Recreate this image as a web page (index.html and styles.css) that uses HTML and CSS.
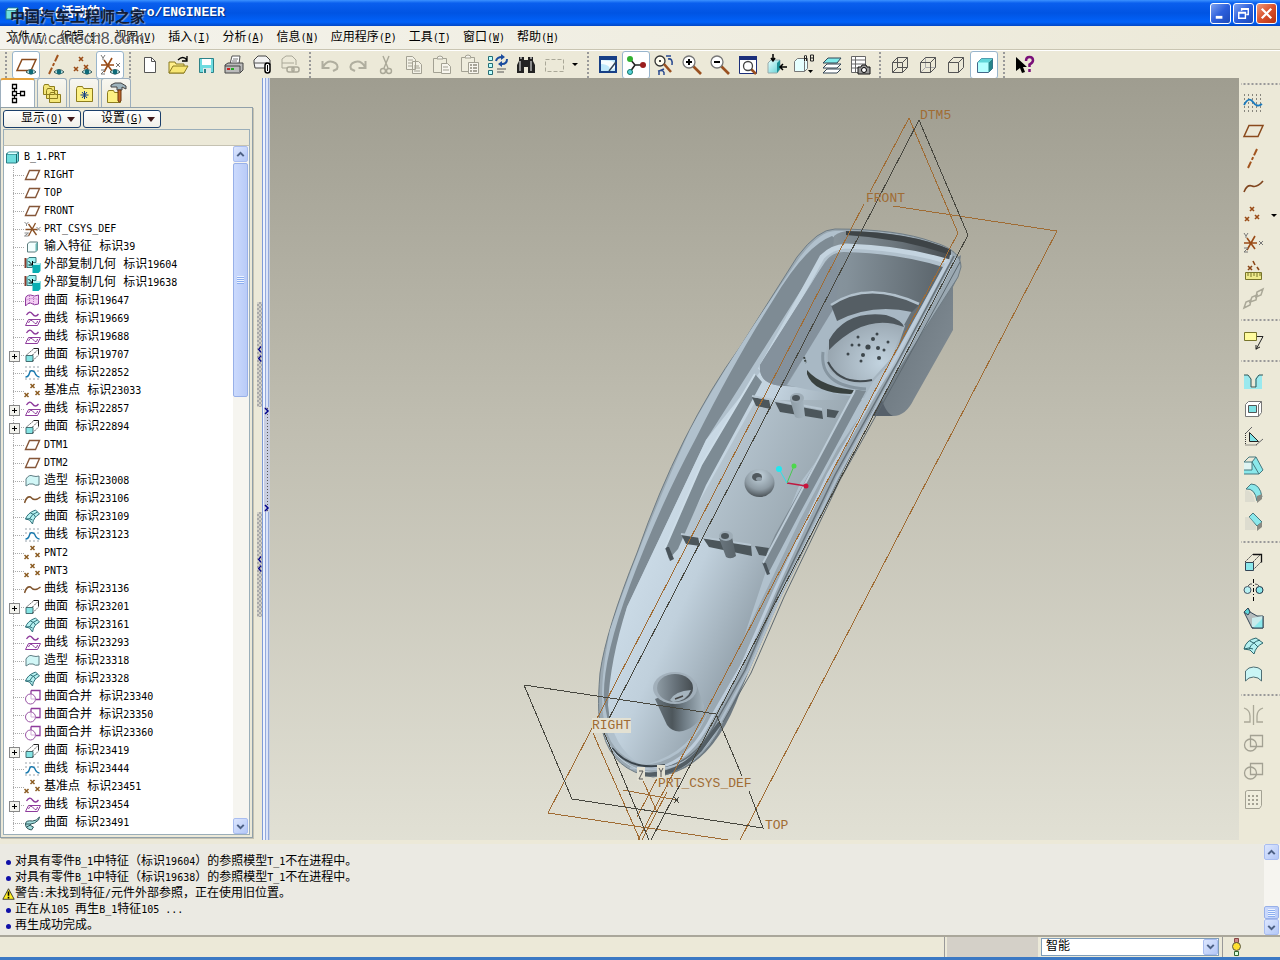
FILE: index.html
```html
<!DOCTYPE html>
<html lang="zh-CN">
<head>
  <meta charset="UTF-8">
  <meta name="viewport" content="width=device-width, initial-scale=1.0">
  <title>B_1 (活动的) - Pro/ENGINEER</title>
  <link rel="stylesheet" href="styles.css">
</head>
<body>
  <!-- 图标定义 -->
  <svg class="defs" aria-hidden="true">
    <defs>
      <linearGradient id="g-cyan" x1="0" y1="0" x2="1" y2="1"><stop offset="0" stop-color="#e8ffff"/><stop offset="1" stop-color="#5fd0d4"/></linearGradient>
    </defs>
    <!-- 模型树图标 16x16 -->
    <symbol id="t-part" viewBox="0 0 16 16"><path d="M2 5l2-2h10v9l-2 2H2z" fill="#6fdede" stroke="#2a7f86"/><path d="M2 5h10v9M12 5l2-2" fill="none" stroke="#1d666c"/><path d="M3 5l1-1.500h9l-1 1.500z" fill="#e2ffff"/></symbol>
    <symbol id="t-plane" viewBox="0 0 16 16"><path d="M5 3.500h10l-4 9H1z" fill="none" stroke="#855638" stroke-width="1.400"/></symbol>
    <symbol id="t-csys" viewBox="0 0 16 16"><path d="M1 8.500h12M4 3l8 11M11 2L4 15" stroke="#8a5024" stroke-width="1.300"/><path d="M0 1l2 2 2-2M2 3v2M0 12h4l-4 3h4M12 6l4 4M16 6l-4 4" fill="none" stroke="#888"/></symbol>
    <symbol id="t-input" viewBox="0 0 16 16"><path d="M3 5l2-2h8v8l-2 2H3z" fill="#f2ffff" stroke="#5b7b7c"/><path d="M11 5v8l2-2V3z" fill="#6bb8b5"/></symbol>
    <symbol id="t-ext" viewBox="0 0 16 16"><path d="M0 1h2v10H0z" fill="#853a2a"/><path d="M2.500 2.500l2-2h7v5H8v5H2.500z" fill="#9df1f1" stroke="#36797d"/><path d="M8 8l2-2h6v8l-2 2H8z" fill="#09aeb3"/><path d="M10 6h6l-1 2H8z" fill="#b5f5f5"/><path d="M4 4l4 4M8 4v4H4" stroke="#000" fill="none"/></symbol>
    <symbol id="t-surf" viewBox="0 0 16 16"><path d="M1 13V6q0-4 5-4 4 2 8 0v9q-4 2-8-1-3 0-5 3z" fill="#f3cdf3" stroke="#8e3b9c"/><path d="M5 3v7M9 4v7M2 7q7-3 12 0" fill="none" stroke="#b771c2" stroke-dasharray="1 1"/></symbol>
    <symbol id="t-proj" viewBox="0 0 16 16"><path d="M2 4q3-5 6-1t6 0" fill="none" stroke="#8e3b9c" stroke-width="1.300"/><path d="M4 8.500h12l-3 6H1zM4 12q2-5 5-1t4-1" fill="none" stroke="#8e3b9c"/></symbol>
    <symbol id="t-sweep" viewBox="0 0 16 16"><path d="M1.500 8.500h7v6h-7z" fill="#85e4e4" stroke="#456e72"/><path d="M2 8l7-6M8 8l6-6M8 14l6-6" stroke="#444" stroke-dasharray="1.500 1"/><path d="M9 1.500h5v6" fill="none" stroke="#222"/></symbol>
    <symbol id="t-sketch" viewBox="0 0 16 16"><path d="M1 2h14M1 6h14M1 14h14" stroke="#345" stroke-dasharray="1 3"/><path d="M1 12q3 0 4-4t5-1q2 5 5 5" fill="none" stroke="#1879ae" stroke-width="1.400"/></symbol>
    <symbol id="t-pnt" viewBox="0 0 16 16"><path d="M6 1l4 4M10 1L6 5M0 10l4 4M4 10l-4 4M11 8l4 4M15 8l-4 4" stroke="#8a5a20" stroke-width="1.500"/></symbol>
    <symbol id="t-style" viewBox="0 0 16 16"><path d="M1.500 13V6q3-5 7-3 3 1 6 0v9q-4 1-6-1-4-1-7 2z" fill="#d2f7f7" stroke="#5f7e84"/></symbol>
    <symbol id="t-curve" viewBox="0 0 16 16"><path d="M0 12q2-7 6-6 4 5 10 0" fill="none" stroke="#80552e" stroke-width="1.500"/></symbol>
    <symbol id="t-bound" viewBox="0 0 16 16"><path d="M1 10Q3 4 11 1l4 4q-6 3-7 10l-3-4z" fill="#b5f1f1" stroke="#31717a"/><path d="M6 4q4 1 5 4M1 10q5-1 7 1M5 10q2-5 8-7" fill="none" stroke="#31717a"/></symbol>
    <symbol id="t-merge" viewBox="0 0 16 16"><path d="M6.500 1.500h9v9h-4M6.500 1.500v4" fill="none" stroke="#8e3b9c" stroke-width="1.300"/><circle cx="6" cy="10" r="5" fill="none" stroke="#9a55a6"/><path d="M6.500 5v5H11" stroke="#d4b0da" fill="none"/></symbol>
    <symbol id="t-blend" viewBox="0 0 16 16"><path d="M15 2Q12 6 8 6 1 5 1 9q0 5 6 6l2-3q-4-1-3-3 4 0 8-4z" fill="#a5dfdf" stroke="#2d5558"/><path d="M1 9h5M2 12l4-2" stroke="#2d5558"/></symbol>

    <!-- 工具栏图标 24x24 -->
    <symbol id="eye" viewBox="0 0 24 24"><path d="M12 19q5-5 10 0-5 4-10 0z" fill="#dff" stroke="#355"/><circle cx="17" cy="19" r="2.400" fill="#0e6a78"/></symbol>
    <symbol id="plane" viewBox="0 0 24 24"><path d="M8 6.500h14l-5 11H3z" fill="none" stroke="#8a4a1c" stroke-width="1.500"/></symbol>
    <symbol id="axis" viewBox="0 0 24 24"><path d="M16 2L7 21" stroke="#a2541e" stroke-width="2" stroke-dasharray="7 2 3 2"/></symbol>
    <symbol id="points" viewBox="0 0 24 24"><path d="M9 4l4 4M13 4L9 8M4 14l4 4M8 14l-4 4M14 12l4 4M18 12l-4 4" stroke="#9a4b16" stroke-width="1.600"/></symbol>
    <symbol id="csys" viewBox="0 0 24 24"><path d="M3 12h13M6 7l8 11M14 5L6 19" stroke="#9a4b16" stroke-width="1.600"/><path d="M3 2l2 3 2-3M5 5v2M3 17h4l-4 4h4M18 10l4 4M22 10l-4 4" fill="none" stroke="#777"/></symbol>
    <symbol id="new" viewBox="0 0 24 24"><path d="M6.500 4.500h7l4 4v11h-11z" fill="#fff" stroke="#555"/><path d="M13.500 4.500v4h4" fill="none" stroke="#555"/></symbol>
    <symbol id="open" viewBox="0 0 24 24"><path d="M3 9h6l1 2h8v9H3z" fill="#ffef8a" stroke="#8a7a20"/><path d="M3 20l4-7h15l-4 7z" fill="#f7e673" stroke="#8a7a20"/><path d="M12 7q5-5 9 0M21 3v5h-5" fill="none" stroke="#000" stroke-width="1.300"/></symbol>
    <symbol id="save" viewBox="0 0 24 24"><path d="M5.500 5.500h14v14h-14z" fill="#6edce0" stroke="#2e8288"/><path d="M8 6h9v6H8z" fill="#fff"/><path d="M9 15h8v5H9z" fill="#dfe8e8"/><path d="M10 16h2v4h-2z" fill="#2e8288"/></symbol>
    <symbol id="print" viewBox="0 0 24 24"><path d="M8 11l2-8h8l-1 8z" fill="#fff" stroke="#555"/><path d="M11 6h5M10 8h5" stroke="#777"/><path d="M3 12l3-2h15v7l-3 3H3z" fill="#bbb" stroke="#444"/><path d="M3 13h15v6" fill="none" stroke="#444"/><path d="M5 16h3" stroke="#c22" stroke-width="2"/><path d="M9 16h3" stroke="#2a2" stroke-width="2"/></symbol>
    <symbol id="mail" viewBox="0 0 24 24"><path d="M4 10V7l4-4h8l4 4v5h-3v3H5z" fill="#f2f2f2" stroke="#444"/><path d="M4 10h13" stroke="#555"/><rect x="15" y="10" width="5" height="10" rx="2.500" fill="#fff" stroke="#000" stroke-width="1.500"/><path d="M17.500 12v6" stroke="#000"/></symbol>
    <symbol id="maillink" viewBox="0 0 24 24"><path d="M4 10V6l4-3h6l4 4v5M4 10v5h6M4 10h12" fill="none" stroke="#aaa898"/><rect x="9" y="14" width="7" height="5" rx="2" fill="none" stroke="#aaa898" stroke-width="1.500"/><rect x="14" y="14" width="7" height="5" rx="2" fill="none" stroke="#aaa898" stroke-width="1.500"/></symbol>
    <symbol id="undo" viewBox="0 0 24 24"><path d="M4.500 8v7h7M5 14q4-7 10-5 6 2 4 7l-4 2" fill="none" stroke="#b0ae9f" stroke-width="2"/></symbol>
    <symbol id="redo" viewBox="0 0 24 24"><path d="M19.500 8v7h-7M19 14q-4-7-10-5-6 2-4 7l4 2" fill="none" stroke="#b0ae9f" stroke-width="2"/></symbol>
    <symbol id="cut" viewBox="0 0 24 24"><path d="M9 3l5 12M15 3l-5 12" stroke="#aaa898" stroke-width="1.400"/><circle cx="9" cy="18" r="2.500" fill="none" stroke="#aaa898" stroke-width="1.400"/><circle cx="15" cy="18" r="2.500" fill="none" stroke="#aaa898" stroke-width="1.400"/></symbol>
    <symbol id="copy" viewBox="0 0 24 24"><path d="M4.500 3.500h6l3 3v10h-9zM10.500 8.500h6l3 3v9h-9z" fill="#f3f1e6" stroke="#a3a193"/><path d="M6 7h5M6 10h4M6 13h4M12 13h5M12 15h6M12 18h6" stroke="#a3a193"/></symbol>
    <symbol id="paste" viewBox="0 0 24 24"><path d="M3.500 5.500h13v14h-13z" fill="#efeddd" stroke="#a3a193"/><path d="M7 6q0-3 3-3t3 3zM11.500 10.500h6l3 3v7h-9z" fill="#f8f6ee" stroke="#a3a193"/><path d="M13 14h5M13 17h6" stroke="#a3a193"/></symbol>
    <symbol id="pastesp" viewBox="0 0 24 24"><path d="M3.500 4.500h13v14h-13z" fill="#efeddd" stroke="#a3a193"/><path d="M7 5q0-3 3-3t3 3zM10.500 9.500h10v11h-10z" fill="#f8f6ee" stroke="#a3a193"/><path d="M12 12h2M15 12h4M12 15h2M15 15h4M12 18h2M15 18h4" stroke="#8d8b7e" stroke-width="1.400"/></symbol>
    <symbol id="regen" viewBox="0 0 24 24"><path d="M2.500 3.500h4v4h-4zM2.500 10.500h4v4h-4zM2.500 17.500h4v4h-4z" fill="#bff" stroke="#276d75"/><path d="M10 8q1-4 6-4M21 6q0 5-5 5" fill="none" stroke="#1a4c9e" stroke-width="2"/><path d="M15 1l4 3-4 3zM16 8v6l-4-3z" fill="#1a4c9e"/><path d="M11 16h9M11 19h7" stroke="#555"/></symbol>
    <symbol id="find" viewBox="0 0 24 24"><path d="M5 4h5v3h4V4h5v4l2 4v8h-7v-6h-4v6H3v-8l2-4z" fill="#222"/><path d="M6 8v10M17 8v10M6 5h2M16 5h2" stroke="#bbb" stroke-width="1.400"/></symbol>
    <symbol id="select" viewBox="0 0 24 24"><path d="M3.500 6.500h18v12h-18z" fill="none" stroke="#aaa898" stroke-dasharray="4 2"/></symbol>
    <symbol id="repaint" viewBox="0 0 24 24"><path d="M3 3h18v17H3z" fill="#173f86"/><path d="M5 7h14v11H5z" fill="#bfe9fb"/><path d="M5 7l10 1q5 1 4 7l-6 3q3-6-8-7z" fill="#f6fdff"/><path d="M13 18l7-9" stroke="#345" stroke-width="1.500"/></symbol>
    <symbol id="spin" viewBox="0 0 24 24"><path d="M6 6l5 6h8M11 12l-5 7" fill="none" stroke="#222" stroke-width="1.600"/><circle cx="6" cy="6" r="3" fill="#30b030"/><circle cx="19" cy="12" r="3" fill="#9a1c1c"/><circle cx="6" cy="19" r="2.500" fill="#58d2dc" stroke="#176"/></symbol>
    <symbol id="orient" viewBox="0 0 24 24"><circle cx="8" cy="8" r="5" fill="#fffdf0" stroke="#333" stroke-width="1.300"/><circle cx="8" cy="8" r="1"/><path d="M12 11l7 8" stroke="#9a5020" stroke-width="2.500"/><path d="M14 3h5M16 6q5-1 4 6M12 16l-5 2v4M6 18q7-2 6 4" fill="none" stroke="#27488f" stroke-width="1.500"/></symbol>
    <symbol id="zoomin" viewBox="0 0 24 24"><path d="M13 13l8 8" stroke="#9a5020" stroke-width="2.600"/><circle cx="9" cy="9" r="6" fill="#fff" stroke="#777" stroke-width="1.300"/><path d="M6 9h6M9 6v6" stroke="#000" stroke-width="2"/></symbol>
    <symbol id="zoomout" viewBox="0 0 24 24"><path d="M13 13l8 8" stroke="#9a5020" stroke-width="2.600"/><circle cx="9" cy="9" r="6" fill="#fff" stroke="#777" stroke-width="1.300"/><path d="M6 9h6" stroke="#000" stroke-width="2"/></symbol>
    <symbol id="refit" viewBox="0 0 24 24"><path d="M3.500 4.500h17v16h-17z" fill="#fff" stroke="#1c2f7a"/><path d="M3 3h18v4H3z" fill="#1c2f7a"/><path d="M15 16l5 5" stroke="#9a5020" stroke-width="2.500"/><circle cx="12" cy="13" r="4.500" fill="#fff" stroke="#444" stroke-width="1.300"/></symbol>
    <symbol id="reorient" viewBox="0 0 24 24"><path d="M4 10l3-3h9v9l-3 4H4z" fill="url(#g-cyan)" stroke="#9aa"/><path d="M13 10l3-3v9l-3 4z" fill="#1c8f95"/><path d="M9 1v6M7 5l2 3 2-3M23 14h-7M19 11l-3 3 3 3" stroke="#000" fill="none" stroke-width="1.500"/></symbol>
    <symbol id="views" viewBox="0 0 24 24"><path d="M2.500 8.500l3-3h10v10l-3 3h-10z" fill="#e6ffff" stroke="#777"/><path d="M12.500 18.500v-10l3-3" fill="none" stroke="#777"/><path d="M12.500 8V3l1-1 1 1v5M12 5.500h3M18.500 2v6h3V2zM18.500 5h3" fill="#ece9d8" stroke="#222"/><path d="M16 17h5l-2.500 3z"/></symbol>
    <symbol id="layers" viewBox="0 0 24 24"><path d="M3 20l4-4h14l-4 4zM3 15l4-4h14l-4 4z" fill="#fff" stroke="#345"/><path d="M3 10l5-5h13l-4 5z" fill="#80eaea" stroke="#345"/></symbol>
    <symbol id="viewmgr" viewBox="0 0 24 24"><path d="M3.500 3.500h14v16h-14zM3.500 7h14M3.500 11h14M3.500 15h14M7.500 4v15" fill="#fff" stroke="#666"/><path d="M10 14h3l1-2h4l1 2h3v7H10z" fill="#999" stroke="#111"/><circle cx="16" cy="17" r="2.500" fill="#fff" stroke="#000"/></symbol>
    <symbol id="wire" viewBox="0 0 24 24"><path d="M4.500 9.500l5-5h10v10l-5 5h-10zM4.500 9.500h10v10M14.500 9.500l5-5M9.500 4.500v10h10M4.500 19.500l5-5" fill="none" stroke="#555"/></symbol>
    <symbol id="hidden" viewBox="0 0 24 24"><path d="M9.500 4.500v10h10M4.500 19.500l5-5" fill="none" stroke="#aaa"/><path d="M4.500 9.500l5-5h10v10l-5 5h-10zM4.500 9.500h10v10M14.500 9.500l5-5" fill="none" stroke="#555"/></symbol>
    <symbol id="nohidden" viewBox="0 0 24 24"><path d="M4.500 9.500l5-5h10v10l-5 5h-10zM4.500 9.500h10v10M14.500 9.500l5-5" fill="none" stroke="#555"/></symbol>
    <symbol id="shade" viewBox="0 0 24 24"><path d="M5.500 9.500l4-4h11v10l-4 4h-11z" fill="#b4ffff" stroke="#468"/><path d="M16.500 9.500l4-4v10l-4 4z" fill="#268589"/><path d="M5.500 9.500h11l4-4h-11z" fill="#5fd5d8"/></symbol>
    <symbol id="help" viewBox="0 0 24 24"><path d="M4 4v14l4-3 2 5 3-1-2-5h4z"/><path d="M14 8q0-4 3.500-4T21 7.500q0 2-3.500 4V14M17.500 16v3" fill="none" stroke="#7a1079" stroke-width="2.500"/></symbol>
    <!-- 右侧工具栏 -->
    <symbol id="sketch" viewBox="0 0 24 24"><path d="M3 4h18M3 8h18M3 12h18M3 16h18M3 20h18" stroke="#222" stroke-dasharray="1 3"/><path d="M3 14q5-9 9-3t9 2" fill="none" stroke="#1879bd" stroke-width="1.800"/></symbol>
    <symbol id="curve" viewBox="0 0 24 24"><path d="M3 17q3-8 8-6 5 2 11-5" fill="none" stroke="#80451e" stroke-width="1.600"/></symbol>
    <symbol id="analysis" viewBox="0 0 24 24"><path d="M7 7l4 4M11 7l-4 4M12 2l2 4M16 8l2 3" stroke="#8a4516" stroke-width="1.600"/><path d="M4.500 13.500h16v7h-16z" fill="#eeea8c" stroke="#77742a"/><path d="M7 14v3M10 14v4M13 14v3M16 14v4M19 14v3" stroke="#77742a"/></symbol>
    <symbol id="chain" viewBox="0 0 24 24"><path d="M3 21l2-6 5-2-1 5-6 3zM9 15l2-5 5-2-1 5zM15 10l1-5 6-3-2 6z" fill="none" stroke="#aaa898" stroke-width="1.500"/></symbol>
    <symbol id="annot" viewBox="0 0 24 24"><path d="M3.500 4.500h12v8h-12z" fill="#fffb9e" stroke="#77742a"/><path d="M16 8.500h6l-7 13M15 21v-4M15 21l4-2" fill="none" stroke="#222"/></symbol>
    <symbol id="hole" viewBox="0 0 24 24"><path d="M3 6h4l3 4v9h4v-9l3-4h4v14H3z" fill="#9ae9ee"/><path d="M3 6h4l3 4v8h5v-8l3-4h4" fill="none" stroke="#355"/></symbol>
    <symbol id="shell" viewBox="0 0 24 24"><path d="M4.500 7.500l3-3h13v11l-3 4h-13z" fill="#fff" stroke="#777"/><path d="M7.500 8.500h8v7h-8z" fill="#7fe3e6" stroke="#555"/><path d="M17.500 19.500V7.500l3-3" fill="none" stroke="#777"/></symbol>
    <symbol id="rib" viewBox="0 0 24 24"><path d="M8.500 7.500v9h9z" fill="#7fe3e6" stroke="#222"/><path d="M5 8l6-6M15 20l7-6" stroke="#666"/><path d="M4.500 8v12h12" fill="none" stroke="#333" stroke-dasharray="1 1"/></symbol>
    <symbol id="draft" viewBox="0 0 24 24"><path d="M3 9h8v8H3z" fill="#dff4f2"/><path d="M11 9l4-5 7 13-4 4H3v-4h8z" fill="#8be8eb"/><path d="M3 9h8v8H3M3 9l5-5h7M11 9l4-5 7 13-4 4zM3 21h15" fill="none" stroke="#47787e"/></symbol>
    <symbol id="round" viewBox="0 0 24 24"><path d="M5 8q9-1 11 12l5-4Q19 3 10 3z" fill="#8be8eb" stroke="#47787e"/><path d="M4 9q8 0 10 12H4z" fill="#dddccf"/><path d="M16 15v7l5-4v-5z" fill="#8a8a82"/></symbol>
    <symbol id="chamfer" viewBox="0 0 24 24"><path d="M8 8l4-4 9 9-5 4z" fill="#8be8eb" stroke="#47787e"/><path d="M4 8h4l7 9v4H4z" fill="#dddccf"/><path d="M16 17v5l5-4v-5z" fill="#8a8a82"/></symbol>
    <symbol id="extrude" viewBox="0 0 24 24"><path d="M4.500 12.500h8v8h-8z" fill="#8be8eb" stroke="#345"/><path d="M4 12l8-8M12 12l8-8M12 20l8-8" stroke="#444" stroke-dasharray="2 1"/><path d="M12 4.500h8.500v8" fill="none" stroke="#111" stroke-width="1.300"/></symbol>
    <symbol id="revolve" viewBox="0 0 24 24"><circle cx="6.500" cy="12" r="3.500" fill="#b6f0f2" stroke="#456"/><circle cx="18.500" cy="12" r="3.500" fill="#8be8eb" stroke="#234"/><path d="M7 8q2-3 4-2M14 6q3 0 4 2" fill="none" stroke="#555"/><path d="M12.500 1v22" stroke="#000" stroke-dasharray="4 2 1 2"/></symbol>
    <symbol id="sweep" viewBox="0 0 24 24"><path d="M3 6l4-4 2 4 7 4h6v12H11z" fill="#b5bcbd" stroke="#345"/><path d="M3 6l4-4 2 4-2 3z" fill="#5fd5d8" stroke="#345"/><path d="M11 21V12l11-2v11z" fill="#c8ebec"/><path d="M12 22L22 12v10z" fill="#8be8eb"/><path d="M22 10v12H11" fill="none" stroke="#345"/></symbol>
    <symbol id="bound" viewBox="0 0 24 24"><path d="M3 15Q5 6 15 4l7 5q-7 3-9 11l-4-4z" fill="#b5f1f1" stroke="#2e686e"/><path d="M9 7q5 2 8 6M3 15q5-2 9 0M8 15q3-7 11-9" fill="none" stroke="#2e686e"/></symbol>
    <symbol id="style" viewBox="0 0 24 24"><path d="M4.500 19V9q3-4 8-4t8 3v11q-3-4-8-4t-8 4z" fill="#c9f5f5" stroke="#4f6e74"/></symbol>
    <symbol id="mirror" viewBox="0 0 24 24"><path d="M3 5q6 2 6 8v6H3M22 5q-6 2-6 8v6h6M12.500 2v20" fill="none" stroke="#aaa898" stroke-width="1.300"/></symbol>
    <symbol id="merge" viewBox="0 0 24 24"><path d="M9.500 4.500h12v11h-12z" fill="none" stroke="#a3a193" stroke-width="1.300"/><circle cx="9.500" cy="14" r="6" fill="none" stroke="#a3a193" stroke-width="1.300"/></symbol>
    <symbol id="pattern" viewBox="0 0 24 24"><path d="M4.500 4.500l2-1h14v15l-2 3h-14z" fill="#efeddd" stroke="#a3a193"/><path d="M7 9h11M7 13h11M7 17h11" stroke="#a3a193" stroke-width="2" stroke-dasharray="2 2"/></symbol>
  </svg>

  <!-- 标题栏 -->
  <header class="titlebar">
    <svg class="title-icon"><use href="#t-part"/></svg>
    <h1 class="title">B_1 (活动的) - Pro/ENGINEER</h1>
    <div class="win-buttons">
      <button class="win-btn" aria-label="最小化"><svg viewBox="0 0 20 20"><path d="M5 14h7" stroke="#fff" stroke-width="3"/></svg></button>
      <button class="win-btn" aria-label="还原"><svg viewBox="0 0 20 20"><path d="M8 7V5h7v6h-2M8 5.500h7M5 9h7v6H5zM5 9.500h7" fill="none" stroke="#fff" stroke-width="1.500"/></svg></button>
      <button class="win-btn close" aria-label="关闭"><svg viewBox="0 0 20 20"><path d="M5 5l10 10M15 5L5 15" stroke="#fff" stroke-width="2.400"/></svg></button>
    </div>
  </header>
  <div class="watermark">
    <div class="wm-cn">中国汽车工程师之家</div>
    <div class="wm-url">www.cartech8.com</div>
  </div>

  <!-- 菜单 -->
  <nav class="menubar">
    <button>文件<span class="en">(<u>F</u>)</span></button>
    <button>编辑<span class="en">(<u>E</u>)</span></button>
    <button>视图<span class="en">(<u>V</u>)</span></button>
    <button>插入<span class="en">(<u>I</u>)</span></button>
    <button>分析<span class="en">(<u>A</u>)</span></button>
    <button>信息<span class="en">(<u>N</u>)</span></button>
    <button>应用程序<span class="en">(<u>P</u>)</span></button>
    <button>工具<span class="en">(<u>T</u>)</span></button>
    <button>窗口<span class="en">(<u>W</u>)</span></button>
    <button>帮助<span class="en">(<u>H</u>)</span></button>
  </nav>

  <!-- 工具栏 -->
  <div class="toolbar">
    <i class="sep"></i>
    <button class="tool on" aria-label="基准平面"><svg><use href="#plane"/><use href="#eye"/></svg></button>
    <button class="tool" aria-label="基准轴"><svg><use href="#axis"/><use href="#eye"/></svg></button>
    <button class="tool" aria-label="基准点"><svg><use href="#points"/><use href="#eye"/></svg></button>
    <button class="tool on" aria-label="坐标系"><svg><use href="#csys"/><use href="#eye"/></svg></button>
    <i class="sep"></i>
    <button class="tool" aria-label="新建"><svg><use href="#new"/></svg></button>
    <button class="tool" aria-label="打开"><svg><use href="#open"/></svg></button>
    <button class="tool" aria-label="保存"><svg><use href="#save"/></svg></button>
    <button class="tool" aria-label="打印"><svg><use href="#print"/></svg></button>
    <button class="tool" aria-label="发送"><svg><use href="#mail"/></svg></button>
    <button class="tool" aria-label="发送链接"><svg><use href="#maillink"/></svg></button>
    <i class="sep"></i>
    <button class="tool" aria-label="撤消"><svg><use href="#undo"/></svg></button>
    <button class="tool" aria-label="重做"><svg><use href="#redo"/></svg></button>
    <button class="tool" aria-label="剪切"><svg><use href="#cut"/></svg></button>
    <button class="tool" aria-label="复制"><svg><use href="#copy"/></svg></button>
    <button class="tool" aria-label="粘贴"><svg><use href="#paste"/></svg></button>
    <button class="tool" aria-label="选择性粘贴"><svg><use href="#pastesp"/></svg></button>
    <button class="tool" aria-label="再生"><svg><use href="#regen"/></svg></button>
    <button class="tool" aria-label="查找"><svg><use href="#find"/></svg></button>
    <button class="tool" aria-label="选取"><svg><use href="#select"/></svg></button>
    <button class="drop" aria-label="选取选项"><i class="caret"></i></button>
    <i class="sep"></i>
    <button class="tool" aria-label="重画"><svg><use href="#repaint"/></svg></button>
    <button class="tool on" aria-label="旋转中心"><svg><use href="#spin"/></svg></button>
    <button class="tool" aria-label="定向模式"><svg><use href="#orient"/></svg></button>
    <button class="tool" aria-label="放大"><svg><use href="#zoomin"/></svg></button>
    <button class="tool" aria-label="缩小"><svg><use href="#zoomout"/></svg></button>
    <button class="tool" aria-label="重新调整"><svg><use href="#refit"/></svg></button>
    <button class="tool" aria-label="重定向"><svg><use href="#reorient"/></svg></button>
    <button class="tool" aria-label="视图列表"><svg><use href="#views"/></svg></button>
    <button class="tool" aria-label="层"><svg><use href="#layers"/></svg></button>
    <button class="tool" aria-label="视图管理器"><svg><use href="#viewmgr"/></svg></button>
    <i class="sep"></i>
    <button class="tool" aria-label="线框"><svg><use href="#wire"/></svg></button>
    <button class="tool" aria-label="隐藏线"><svg><use href="#hidden"/></svg></button>
    <button class="tool" aria-label="无隐藏线"><svg><use href="#nohidden"/></svg></button>
    <button class="tool on" aria-label="着色"><svg><use href="#shade"/></svg></button>
    <i class="sep"></i>
    <button class="tool" aria-label="帮助"><svg><use href="#help"/></svg></button>
  </div>

  <main class="main">
    <!-- 导航器 -->
    <aside class="navigator">
      <div class="tabs">
        <button class="tab active" aria-label="模型树"><svg viewBox="0 0 24 24"><path d="M6.500 2.500h4v4h-4zM6.500 9.500h4v4h-4zM6.500 16.500h4v4h-4zM14.500 9.500h4v4h-4z" fill="#fff" stroke="#000" stroke-width="1.300"/><path d="M8.500 7v2M8.500 14v2M11 11.500h3" stroke="#000"/></svg></button>
        <button class="tab" aria-label="文件夹"><svg viewBox="0 0 24 24"><path d="M3.500 5.500l1-2h4l1 2h5v8h-11zM6.500 9.500l1-2h4l1 2h5v8h-11zM9.500 13.500l1-2h4l1 2h5v8h-11z" fill="#f4e678" stroke="#8d7d1d"/></svg></button>
        <button class="tab" aria-label="收藏夹"><svg viewBox="0 0 24 24"><path d="M4.500 7.500l1-2h5l1 2h9v13h-16z" fill="#fdf184" stroke="#8d7d1d"/><path d="M12.500 10v8M8.500 14h8M10 11l5 6M15 11l-5 6" stroke="#123e86"/></svg></button>
        <button class="tab" aria-label="连接"><svg viewBox="0 0 24 24"><path d="M3.500 11.500l1-2h5l1 2h6v10h-13z" fill="#fdf184" stroke="#8d7d1d"/><path d="M7 4l4-2h6l5 3v3l-4-2v3h-5V6H7z" fill="#9fb4bd" stroke="#444"/><path d="M14 9h3v11q-1.500 2-3 0z" fill="#c46a2a" stroke="#6b350e"/></svg></button>
      </div>
      <div class="panel">
        <div class="panel-buttons">
          <button class="menu-btn">显示<span class="en">(<u>O</u>)</span><i class="caret"></i></button>
          <button class="menu-btn">设置<span class="en">(<u>G</u>)</span><i class="caret"></i></button>
        </div>
        <div class="tree-head"></div>
        <div class="tree-box">
          <ul class="tree">
            <li class="root"><svg><use href="#t-part"/></svg><span class="en">B_1.PRT</span></li>
            <li><svg><use href="#t-plane"/></svg><span class="en">RIGHT</span></li>
            <li><svg><use href="#t-plane"/></svg><span class="en">TOP</span></li>
            <li><svg><use href="#t-plane"/></svg><span class="en">FRONT</span></li>
            <li><svg><use href="#t-csys"/></svg><span class="en">PRT_CSYS_DEF</span></li>
            <li><svg><use href="#t-input"/></svg>输入特征 标识<span class="en">39</span></li>
            <li><svg><use href="#t-ext"/></svg>外部复制几何 标识<span class="en">19604</span></li>
            <li><svg><use href="#t-ext"/></svg>外部复制几何 标识<span class="en">19638</span></li>
            <li><svg><use href="#t-surf"/></svg>曲面 标识<span class="en">19647</span></li>
            <li><svg><use href="#t-proj"/></svg>曲线 标识<span class="en">19669</span></li>
            <li><svg><use href="#t-proj"/></svg>曲线 标识<span class="en">19688</span></li>
            <li class="plus"><svg><use href="#t-sweep"/></svg>曲面 标识<span class="en">19707</span></li>
            <li><svg><use href="#t-sketch"/></svg>曲线 标识<span class="en">22852</span></li>
            <li><svg><use href="#t-pnt"/></svg>基准点 标识<span class="en">23033</span></li>
            <li class="plus"><svg><use href="#t-proj"/></svg>曲线 标识<span class="en">22857</span></li>
            <li class="plus"><svg><use href="#t-sweep"/></svg>曲面 标识<span class="en">22894</span></li>
            <li><svg><use href="#t-plane"/></svg><span class="en">DTM1</span></li>
            <li><svg><use href="#t-plane"/></svg><span class="en">DTM2</span></li>
            <li><svg><use href="#t-style"/></svg>造型 标识<span class="en">23008</span></li>
            <li><svg><use href="#t-curve"/></svg>曲线 标识<span class="en">23106</span></li>
            <li><svg><use href="#t-bound"/></svg>曲面 标识<span class="en">23109</span></li>
            <li><svg><use href="#t-sketch"/></svg>曲线 标识<span class="en">23123</span></li>
            <li><svg><use href="#t-pnt"/></svg><span class="en">PNT2</span></li>
            <li><svg><use href="#t-pnt"/></svg><span class="en">PNT3</span></li>
            <li><svg><use href="#t-curve"/></svg>曲线 标识<span class="en">23136</span></li>
            <li class="plus"><svg><use href="#t-sweep"/></svg>曲面 标识<span class="en">23201</span></li>
            <li><svg><use href="#t-bound"/></svg>曲面 标识<span class="en">23161</span></li>
            <li><svg><use href="#t-proj"/></svg>曲线 标识<span class="en">23293</span></li>
            <li><svg><use href="#t-style"/></svg>造型 标识<span class="en">23318</span></li>
            <li><svg><use href="#t-bound"/></svg>曲面 标识<span class="en">23328</span></li>
            <li><svg><use href="#t-merge"/></svg>曲面合并 标识<span class="en">23340</span></li>
            <li><svg><use href="#t-merge"/></svg>曲面合并 标识<span class="en">23350</span></li>
            <li><svg><use href="#t-merge"/></svg>曲面合并 标识<span class="en">23360</span></li>
            <li class="plus"><svg><use href="#t-sweep"/></svg>曲面 标识<span class="en">23419</span></li>
            <li><svg><use href="#t-sketch"/></svg>曲线 标识<span class="en">23444</span></li>
            <li><svg><use href="#t-pnt"/></svg>基准点 标识<span class="en">23451</span></li>
            <li class="plus"><svg><use href="#t-proj"/></svg>曲线 标识<span class="en">23454</span></li>
            <li><svg><use href="#t-blend"/></svg>曲面 标识<span class="en">23491</span></li>
          </ul>
          <div class="scrollbar">
            <button class="sb-btn" aria-label="向上"><svg viewBox="0 0 16 16"><path d="M4 10l4-4 4 4" fill="none" stroke="#4d6185" stroke-width="2.500"/></svg></button>
            <div class="sb-thumb tree-thumb"><i></i></div>
            <div class="sb-space"></div>
            <button class="sb-btn" aria-label="向下"><svg viewBox="0 0 16 16"><path d="M4 6l4 4 4-4" fill="none" stroke="#4d6185" stroke-width="2.500"/></svg></button>
          </div>
        </div>
      </div>
    </aside>
    <div class="gutter">
      <div class="grip"><svg viewBox="0 0 6 24"><path d="M5 3L2 6.500 5 10M5 14l-3 3.500L5 21" fill="none" stroke="#00008b" stroke-width="1.500"/></svg></div>
      <div class="grip"><svg viewBox="0 0 6 24"><path d="M5 3L2 6.500 5 10M5 14l-3 3.500L5 21" fill="none" stroke="#00008b" stroke-width="1.500"/></svg></div>
    </div>
    <div class="splitter">
      <div class="split-grip">
        <svg viewBox="0 0 6 8"><path d="M1 1l3 3-3 3" fill="none" stroke="#00008b" stroke-width="1.500"/></svg>
        <svg viewBox="0 0 6 8"><path d="M1 1l3 3-3 3" fill="none" stroke="#00008b" stroke-width="1.500"/></svg>
      </div>
    </div>

    <!-- 图形窗口 -->
    <section class="viewport">
      <svg class="model" viewBox="270 78 969 762" preserveAspectRatio="xMidYMid slice">
        <defs>
          <linearGradient id="floor" gradientUnits="userSpaceOnUse" x1="640" y1="560" x2="770" y2="620"><stop offset="0" stop-color="#cbdbe7"/><stop offset=".4" stop-color="#c0d0dc"/><stop offset="1" stop-color="#8e9ca6"/></linearGradient>
          <linearGradient id="deck" gradientUnits="userSpaceOnUse" x1="720" y1="430" x2="830" y2="480"><stop offset="0" stop-color="#b9c8d3"/><stop offset="1" stop-color="#98a6af"/></linearGradient>
          <linearGradient id="side" gradientUnits="userSpaceOnUse" x1="880" y1="350" x2="950" y2="380"><stop offset="0" stop-color="#6c777f"/><stop offset="1" stop-color="#808b93"/></linearGradient>
          <linearGradient id="cav" gradientUnits="userSpaceOnUse" x1="800" y1="300" x2="930" y2="310"><stop offset="0" stop-color="#8b99a3"/><stop offset=".35" stop-color="#84919a"/><stop offset="1" stop-color="#5f6970"/></linearGradient>
          <linearGradient id="endwall"><stop offset="0" stop-color="#87939b"/><stop offset=".5" stop-color="#6d777e"/><stop offset="1" stop-color="#474d51"/></linearGradient>
          <linearGradient id="cyl"><stop offset="0" stop-color="#6a767e"/><stop offset=".35" stop-color="#4d565b"/><stop offset=".6" stop-color="#6f7c85"/><stop offset="1" stop-color="#a5b4be"/></linearGradient>
          <linearGradient id="cylin"><stop offset="0" stop-color="#8e9ba4"/><stop offset=".5" stop-color="#67727a"/><stop offset="1" stop-color="#454c50"/></linearGradient>
          <radialGradient id="knob" cx=".5" cy=".25" r=".8"><stop offset="0" stop-color="#c2d2dc"/><stop offset=".6" stop-color="#8e9ba4"/><stop offset="1" stop-color="#40474b"/></radialGradient>
          <radialGradient id="dish" cx=".7" cy=".7" r=".8"><stop offset="0" stop-color="#c2d3df"/><stop offset="1" stop-color="#929fa9"/></radialGradient>
        </defs>
        <!-- 外壳 -->
        <path d="M961 255L958 277 953 287V330L914 399Q906 416 893 416H868L781 590 741 690Q712 772 655 777L700 700 900 300z" fill="url(#side)"/>
        <path d="M893 416H868L880 392Q884 412 893 416z" fill="#56606a"/>
        <path d="M835 229Q898 229 933 242 961 250 961 267L958 277 872 412 830 497 780 598 743 684 723 723Q700 772 653 777 613 771 603 733 596 720 600 673 606 630 637 553 680 430 740 347L797 257Q818 229 835 229z" fill="#9aa8b2" stroke="#6f7c84"/>
        <path d="M835 231Q898 230 933 244 952 250 952 256L900 358 838 448 800 520 740 645 710 707Q690 762 643 765 609 755 604 720 598 690 610 630 640 540 690 430 725 365 800 257 820 231 835 231z" fill="#b1c1cd"/>
        <!-- 左内壁 -->
        <path d="M832 236L845 245 822 257 706 440 627 607Q605 690 610 733L604 700Q602 660 630 585 660 505 695 440 735 360 772 302 805 246 832 236z" fill="#7e8b94"/>
        <!-- 底面 -->
        <path d="M706 440L760 372 870 385 825 440 800 483 773 550 743 640 710 707Q690 755 643 765 612 750 608 705 610 660 627 607z" fill="url(#floor)"/>
        <path d="M756 400L862 400 800 483 772 550 680 536z" fill="url(#deck)"/>
        <path d="M755 374L762 382 706 485 678 549 669 559 665 548 701 465z" fill="#7d8b94"/>
        <path d="M665 547l4 0 5 12-4 2z" fill="#49535a"/>
        <path d="M755 374L701 465 665 548" fill="none" stroke="#cddde8" stroke-width="2"/>
        <!-- 上端内壁 -->
        <path d="M834 236Q840 231 850 231 910 232 951 250L949 260Q900 246 843 245L833 252z" fill="url(#endwall)"/>
        <path d="M846 231Q911 232 951 250V255Q900 238 846 235z" fill="#3e4447"/>
        <path d="M760 370L822 257Q832 247 846 246 905 248 949 262" fill="none" stroke="#c4d4e0" stroke-width="5"/>
        <!-- 凹腔 -->
        <path d="M844 252Q898 253 943 267L893 358 862 392 785 386Q758 385 760 365L825 262Q832 252 844 252z" fill="url(#cav)"/>
        <path d="M833 257Q844 280 832 315L785 386Q758 385 760 365L812 283Q825 260 833 257z" fill="#84919c"/>
        <path d="M834 308L787 385Q810 391 864 398L915 305 870 293z" fill="#a8b8c4"/>
        <path d="M831 305Q868 280 911 300L920 304 912 312Q872 303 837 321z" fill="#555e64"/>
        <path d="M831 305Q868 280 919 304" fill="none" stroke="#b2c1cc" stroke-width="2.500"/>
        <path d="M807 374Q813 393 850 394L862 391Q822 388 807 370z" fill="#39413f"/>
        <path d="M804 357l2 6" stroke="#39413f" stroke-width="2" stroke-dasharray="2 1"/>
        <path d="M823 352Q819 386 866 389" fill="none" stroke="#8695a0" stroke-width="3"/>
        <path d="M904 326Q872 308 840 328 820 349 830 372 845 387 872 381L893 358z" fill="url(#dish)" stroke="#a5b4bf" stroke-width="2"/>
        <path d="M829 340Q846 310 886 315 902 320 904 327 866 312 829 350z" fill="#4e575d"/>
        <path d="M828 362Q840 386 872 380" fill="none" stroke="#424a4f" stroke-width="2"/>
        <g fill="#3d464b"><circle cx="858" cy="337" r="1.500"/><circle cx="877" cy="334" r="1.500"/><circle cx="873" cy="339" r="2"/><circle cx="888" cy="342" r="1.500"/><circle cx="852" cy="345" r="1.500"/><circle cx="859" cy="345" r="1.500"/><circle cx="868" cy="347" r="2.600"/><circle cx="878" cy="348" r="2"/><circle cx="884" cy="350" r="1.500"/><circle cx="848" cy="354" r="1.500"/><circle cx="863" cy="355" r="2"/><circle cx="879" cy="358" r="2"/><circle cx="861" cy="361" r="1.500"/></g>
        <!-- 右侧筋 -->
        <path d="M856 390L866 391 800 513 768 574 763 562 775 535z" fill="#7d8a93"/>
        <path d="M762 562l4 1 4 11-3 1z" fill="#49535a"/>
        <path d="M855 390L763 563" stroke="#bdccd7" stroke-width="2"/>
        <!-- 卡扣 -->
        <g fill="#4c565b"><path d="M752 397l17 3 2 9-15-3zM775 402l47 9 1 8-43-7zM827 409l12 2-4 7-8-1zM681 534l17 3 2 9-14-2zM703 538l48 7 1 11-43-9zM755 546l14 2-3 8-7-1z"/></g>
        <path d="M752 396l70 13M681 534l70 11" stroke="#b7c6d1" stroke-width="2"/>
        <path d="M790 399l5 18q5 3 10-1l-2-17zM719 538l7 19q5 3 10-1l-4-19z" fill="url(#cyl)"/>
        <ellipse cx="797" cy="398" rx="7" ry="5" fill="#9eacb6"/><ellipse cx="796" cy="398" rx="4" ry="3" fill="#4b5459"/>
        <ellipse cx="726" cy="536" rx="7" ry="5" fill="#9eacb6"/><ellipse cx="725" cy="536" rx="4" ry="3" fill="#4b5459"/>
        <ellipse cx="759.500" cy="483" rx="15" ry="14" fill="url(#knob)"/><ellipse cx="757" cy="477" rx="5" ry="4" fill="#51595e"/><ellipse cx="759" cy="479" rx="3" ry="2" fill="#8d9aa3"/>
        <!-- 圆柱 -->
        <path d="M655 699l12 26q6 8 16 6 18-5 21-25l-8-23z" fill="url(#cyl)"/>
        <ellipse cx="675" cy="688" rx="22" ry="16" fill="#a2b0bb"/><ellipse cx="675" cy="688" rx="18" ry="14" fill="url(#cylin)"/>
        <path d="M670 700q5-9 21-10-4 11-18 12z" fill="#a5b4be"/><path d="M675 699l8-3" stroke="#444" stroke-width="1.500"/>
        <!-- 右侧边缘 -->
        <g fill="none">
          <path d="M949 260L893 362 828 475 775 590 742 665 713 715Q685 772 643 769" stroke="#becddb" stroke-width="3"/>
          <path d="M954 256L897 363 835 475 778 593 745 670 717 720Q690 776 635 769" stroke="#657078" stroke-width="1.500"/>
          <path d="M956 258L900 363 837 478 781 595 748 671 720 722Q695 778 630 768" stroke="#afbecb" stroke-width="2"/>
          <path d="M960 262L903 367 840 480 784 597 751 673 723 722" stroke="#5d686f"/>
          <path d="M612 748Q630 771 665 765" stroke="#39434a" stroke-width="2"/>
          <path d="M606 740Q625 774 662 773" stroke="#c0cfda"/>
          <path d="M640 774Q675 778 700 750L720 723" stroke="#535e65" stroke-width="4"/>
        </g>
        <!-- 基准线 -->
        <g fill="none" stroke="#a06c34" shape-rendering="crispEdges">
          <path d="M893 206L1057 231 740 840M909 118L958 233 638 840M909 118L870 192M864 204L548 813 728 840M593 733L640 840M623 790L677 800M641 776L657 812M661 771L637 817M667 792L642 840"/>
        </g>
        <g fill="none" stroke="#47473f" shape-rendering="crispEdges">
          <path d="M919 120L968 235 651 840M919 120L603 730 649 840M524 685L716 714 742 776M749 791L763 828 572 799 524 685M674 797l5 6M679 797l-5 6"/>
        </g>
        <g fill="#e3e1d3"><path d="M592 718h39v15h-39zM637 767h8v14h-8zM657 765h8v14h-8z"/></g>
        <g class="datum">
          <text x="920" y="119">DTM5</text><text x="866" y="202">FRONT</text><text x="592" y="729">RIGHT</text><text x="658" y="787">PRT_CSYS_DEF</text><text x="765" y="829">TOP</text>
        </g>
        <path d="M639 771h4l-4 8h4M659 768l2 4 2-4M661 772v5" fill="none" stroke="#555"/>
        <path d="M787 483l19 3" stroke="#c01840" stroke-width="1.500"/><path d="M787 483l7-17" stroke="#48c850"/><path d="M787 483l-8-14" stroke="#30e0e8"/>
        <circle cx="806" cy="486" r="2.500" fill="#c8143c"/><circle cx="794" cy="466" r="2.500" fill="#4cd84c"/><circle cx="779" cy="469" r="3" fill="#20e8f0"/>
      </svg>
    </section>

    <!-- 特征工具栏 -->
    <div class="side-tools">
      <i class="hsep first"></i>
      <button class="tool" aria-label="草绘"><svg><use href="#sketch"/></svg></button>
      <button class="tool" aria-label="平面"><svg><use href="#plane"/></svg></button>
      <button class="tool" aria-label="轴"><svg><use href="#axis"/></svg></button>
      <button class="tool" aria-label="曲线"><svg><use href="#curve"/></svg></button>
      <div class="tool-pair"><button class="tool" aria-label="点"><svg><use href="#points"/></svg></button><button class="drop" aria-label="点选项"><i class="caret"></i></button></div>
      <button class="tool" aria-label="坐标系"><svg><use href="#csys"/></svg></button>
      <button class="tool" aria-label="分析"><svg><use href="#analysis"/></svg></button>
      <button class="tool" aria-label="参照"><svg><use href="#chain"/></svg></button>
      <i class="hsep"></i>
      <button class="tool" aria-label="注释"><svg><use href="#annot"/></svg></button>
      <i class="hsep"></i>
      <button class="tool" aria-label="孔"><svg><use href="#hole"/></svg></button>
      <button class="tool" aria-label="壳"><svg><use href="#shell"/></svg></button>
      <button class="tool" aria-label="筋"><svg><use href="#rib"/></svg></button>
      <button class="tool" aria-label="拔模"><svg><use href="#draft"/></svg></button>
      <button class="tool" aria-label="倒圆角"><svg><use href="#round"/></svg></button>
      <button class="tool" aria-label="倒角"><svg><use href="#chamfer"/></svg></button>
      <i class="hsep"></i>
      <button class="tool" aria-label="拉伸"><svg><use href="#extrude"/></svg></button>
      <button class="tool" aria-label="旋转"><svg><use href="#revolve"/></svg></button>
      <button class="tool" aria-label="扫描"><svg><use href="#sweep"/></svg></button>
      <button class="tool" aria-label="边界混合"><svg><use href="#bound"/></svg></button>
      <button class="tool" aria-label="造型"><svg><use href="#style"/></svg></button>
      <i class="hsep"></i>
      <button class="tool" aria-label="镜像"><svg><use href="#mirror"/></svg></button>
      <button class="tool" aria-label="合并"><svg><use href="#merge"/></svg></button>
      <button class="tool" aria-label="修剪"><svg><use href="#merge"/></svg></button>
      <button class="tool" aria-label="阵列"><svg><use href="#pattern"/></svg></button>
    </div>
  </main>

  <!-- 消息区 -->
  <section class="messages">
    <ul class="msg-list">
      <li>对具有零件<span class="en">B_1</span>中特征（标识<span class="en">19604</span>）的参照模型<span class="en">T_1</span>不在进程中。</li>
      <li>对具有零件<span class="en">B_1</span>中特征（标识<span class="en">19638</span>）的参照模型<span class="en">T_1</span>不在进程中。</li>
      <li class="warn"><svg viewBox="0 0 16 16"><path d="M8 1.500l7 13H1z" fill="#ffee20" stroke="#222"/><path d="M8 5v5M8 11.500v2" stroke="#000" stroke-width="2"/></svg>警告<span class="en">:</span>未找到特征<span class="en">/</span>元件外部参照，正在使用旧位置。</li>
      <li>正在从<span class="en">105 </span>再生<span class="en">B_1</span>特征<span class="en">105 ...</span></li>
      <li>再生成功完成。</li>
    </ul>
    <div class="scrollbar">
      <button class="sb-btn" aria-label="向上"><svg viewBox="0 0 16 16"><path d="M4 10l4-4 4 4" fill="none" stroke="#4d6185" stroke-width="2.500"/></svg></button>
      <div class="sb-space"></div>
      <div class="sb-thumb msg-thumb"><i></i></div>
      <button class="sb-btn" aria-label="向下"><svg viewBox="0 0 16 16"><path d="M4 6l4 4 4-4" fill="none" stroke="#4d6185" stroke-width="2.500"/></svg></button>
    </div>
  </section>

  <!-- 状态栏 -->
  <footer class="statusbar">
    <div class="status-info"></div>
    <div class="filter">
      <select aria-label="选取过滤器"><option>智能</option></select>
      <span class="sb-btn"><svg viewBox="0 0 16 16"><path d="M4 6l4 4 4-4" fill="none" stroke="#4d6185" stroke-width="2.500"/></svg></span>
    </div>
    <div class="light"><svg viewBox="0 0 12 20"><path d="M3.500 1.500h4v4h-4z" fill="#c88" stroke="#844"/><circle cx="5.500" cy="9.500" r="4" fill="#ffe030" stroke="#554"/><path d="M3.500 14.500h4v4h-4z" fill="#dfd" stroke="#363"/></svg></div>
  </footer>
</body>
</html>
```

FILE: styles.css
```css
* {
  box-sizing: border-box;
}
body {
  margin: 0;
  height: 100vh;
  display: flex;
  flex-direction: column;
  overflow: hidden;
  background: #ece9d8;
  border-bottom: 3px solid #3c79c4;
  color: #000;
  font: 12px/16px "Liberation Mono", "Noto Sans CJK SC", monospace;
}
button {
  padding: 0;
  border: 0;
  background: none;
  color: inherit;
  font: inherit;
}
ul {
  margin: 0;
  padding: 0;
  list-style: none;
}
svg {
  display: block;
}
.defs {
  position: absolute;
  width: 0;
  height: 0;
}
.en {
  font-family: "DejaVu Sans Mono", monospace;
  font-size: 10px;
  white-space: pre;
}
.caret {
  border: 4px solid transparent;
  border-top-color: #000;
  border-bottom: 0;
}

/* 标题栏 */
.titlebar {
  flex: none;
  height: 26px;
  display: flex;
  align-items: center;
  padding: 0 3px 0 4px;
  background: linear-gradient(#3b92ff, #0a5fee 12%, #0054e3 50%, #0162f9 85%, #0247c5);
}
.title-icon {
  width: 16px;
  height: 16px;
}
.title {
  flex: 1;
  margin: 0 0 0 2px;
  color: #fff;
  font-size: 13px;
  font-weight: bold;
  text-shadow: 1px 1px 1px #0a2f80;
}
.win-buttons {
  display: flex;
  gap: 2px;
}
.win-btn {
  width: 21px;
  height: 21px;
  border: 1px solid #fff;
  border-radius: 3px;
  background: linear-gradient(135deg, #7ea2f0, #2c5fdc 50%, #1c49b8);
}
.win-btn.close {
  background: linear-gradient(135deg, #ee9a7c, #d9512c 50%, #b53212);
}
.watermark {
  position: absolute;
  left: 10px;
  top: 9px;
  pointer-events: none;
}
.wm-cn {
  color: #111d38;
  font-size: 15px;
  line-height: 20px;
  font-weight: bold;
  text-shadow: 1px 1px 1px #8ba0c8;
}
.wm-url {
  color: #555;
  font: 16px/20px "Liberation Sans", sans-serif;
  text-shadow: 1px 1px 0 #fff;
}

/* 菜单 */
.menubar {
  flex: none;
  height: 24px;
  display: flex;
  align-items: center;
  background: linear-gradient(90deg, #f4f3ec, #ece9d8);
  border-bottom: 1px solid #c9c5b2;
}
.menubar button {
  padding: 0 6px;
  white-space: nowrap;
}

/* 工具栏 */
.toolbar {
  flex: none;
  height: 28px;
  display: flex;
  align-items: center;
  border-top: 1px solid #fff;
}
.tool {
  flex: none;
  width: 28px;
  height: 28px;
  display: flex;
  align-items: center;
  justify-content: center;
}
.tool svg {
  width: 24px;
  height: 24px;
}
.tool.on {
  background: #fff;
  border: 1px solid #98b5cc;
  border-radius: 3px;
}
.drop {
  width: 14px;
  height: 28px;
  display: flex;
  align-items: center;
  justify-content: center;
}
.drop .caret {
  border-width: 3px;
  border-bottom: 0;
}
.sep {
  flex: none;
  width: 12px;
  height: 26px;
  background: radial-gradient(circle, #999 1px, transparent 1px) center / 4px 4px repeat-y;
}

.main {
  flex: 1;
  min-height: 0;
  display: flex;
}

/* 导航器 */
.navigator {
  flex: none;
  width: 253px;
  display: flex;
  flex-direction: column;
  padding-bottom: 2px;
}
.tabs {
  display: flex;
  gap: 2px;
}
.tab {
  width: 30px;
  height: 29px;
  display: flex;
  align-items: center;
  justify-content: center;
  border: 1px solid #9dafbe;
  border-bottom: 0;
  border-radius: 3px 3px 0 0;
  background: linear-gradient(#f7f6f0, #ece9d8);
}
.tab svg {
  width: 24px;
  height: 24px;
}
.tab.active {
  width: 35px;
  background: #fff;
  border-top: 2px solid #e5a13a;
}
.panel {
  flex: 1;
  min-height: 0;
  display: flex;
  flex-direction: column;
  padding: 2px;
  border: 1px solid #91a0a9;
  box-shadow: 1px 1px 0 #c5c2b2;
}
.panel-buttons {
  display: flex;
  gap: 2px;
}
.menu-btn {
  width: 78px;
  height: 18px;
  display: flex;
  align-items: center;
  justify-content: center;
  padding-left: 12px;
  border: 1px solid #1b3f6b;
  border-radius: 3px;
  background: linear-gradient(#fff, #f0efe8);
}
.menu-btn .caret {
  margin-left: 4px;
  border-top: 5px solid #401818;
}
.tree-head {
  flex: none;
  height: 17px;
  margin-top: 1px;
  border: 1px solid #9aaeb9;
  border-bottom-color: #c5c2b2;
}
.tree-box {
  flex: 1;
  min-height: 0;
  display: flex;
  background: #fff;
  border: 1px solid #9aaeb9;
  border-top: 0;
}
.tree {
  flex: 1;
  overflow: hidden;
  padding-top: 2px;
}
.tree li {
  position: relative;
  height: 18px;
  display: flex;
  align-items: center;
  padding-left: 20px;
  white-space: pre;
  background:
    repeating-linear-gradient(#aaa 0 1px, transparent 1px 2px) 9px 0 / 1px 100% no-repeat,
    repeating-linear-gradient(90deg, #aaa 0 1px, transparent 1px 2px) 9px 9px / 12px 1px no-repeat;
}
.tree li svg {
  width: 17px;
  height: 16px;
  margin-right: 3px;
}
.tree li.root {
  padding-left: 0;
  background: none;
}
.tree li.plus::before {
  content: "";
  position: absolute;
  left: 5px;
  top: 5px;
  width: 9px;
  height: 9px;
  border: 1px solid #888;
  background:
    linear-gradient(#000, #000) center / 5px 1px no-repeat,
    linear-gradient(#000, #000) center / 1px 5px no-repeat,
    #f3f3ee;
}

/* 滚动条 */
.scrollbar {
  flex: none;
  width: 16px;
  display: flex;
  flex-direction: column;
  background: #f6f5f0;
}
.sb-btn {
  flex: none;
  width: 15px;
  height: 16px;
  border: 1px solid #a9bdf0;
  border-radius: 2px;
  background: linear-gradient(135deg, #dce6fe, #b4c8f7);
}
.sb-space {
  flex: 1;
}
.sb-thumb {
  width: 15px;
  display: flex;
  align-items: center;
  justify-content: center;
  border: 1px solid #98b0e8;
  border-radius: 2px;
  background: linear-gradient(90deg, #cbdafd, #b9cbf7);
}
.sb-thumb i {
  width: 7px;
  height: 8px;
  background: repeating-linear-gradient(#eef4ff 0 1px, #8caef0 1px 2px);
}
.tree-thumb {
  height: 34%;
  margin-top: 1px;
}
.msg-thumb {
  height: 13px;
}

.gutter {
  flex: none;
  width: 9px;
  display: flex;
  flex-direction: column;
  align-items: flex-end;
  justify-content: center;
  gap: 105px;
}
.grip {
  width: 5px;
  height: 105px;
  display: flex;
  align-items: center;
  background: repeating-conic-gradient(#aaa 0 25%, #d4d2c8 0 50%) 0 0 / 4px 4px;
}
.grip svg {
  width: 5px;
  height: 24px;
}
.splitter {
  flex: none;
  width: 8px;
  display: flex;
  align-items: center;
  justify-content: flex-end;
  background: linear-gradient(90deg, #7f9bd6 1px, #eef2fc 1px 3px, #93a9dc 3px 4px, #dbe4f8 4px 6px, #93a9dc 6px 7px, #c8d0e0 7px);
}
.split-grip {
  width: 6px;
  height: 105px;
  display: flex;
  flex-direction: column;
  justify-content: space-between;
  background: radial-gradient(circle, #555 1px, transparent 1px) center / 3px 3px repeat-y #c8cde0;
}
.split-grip svg {
  width: 6px;
  height: 8px;
}

.viewport {
  flex: 1;
  min-width: 0;
  background: linear-gradient(#9f9d90, #bfbdb0 45%, #e1e0d4);
}
.model {
  width: 100%;
  height: 100%;
}
.datum {
  fill: #a06c34;
  font: 13px "Liberation Mono", monospace;
}

.side-tools {
  flex: none;
  width: 41px;
}
.tool-pair {
  display: flex;
}
.hsep {
  display: block;
  height: 13px;
  margin-left: 2px;
  background: radial-gradient(circle, #999 1px, transparent 1px) center / 4px 4px repeat-x;
}
.hsep.first {
  height: 11px;
}

/* 消息区 */
.messages {
  flex: none;
  height: 97px;
  display: flex;
  background: #ebeae3;
  border-top: 4px solid #ece9d8;
  border-bottom: 2px solid #aaa79b;
}
.msg-list {
  flex: 1;
  padding: 10px 0 0 2px;
}
.msg-list li {
  height: 16px;
  display: flex;
  align-items: center;
  white-space: pre;
}
.msg-list li::before {
  content: "";
  width: 5px;
  height: 5px;
  margin: 0 4px;
  border-radius: 50%;
  background: #1010a8;
}
.msg-list li.warn::before {
  display: none;
}
.msg-list svg {
  width: 13px;
  height: 16px;
}

/* 状态栏 */
.statusbar {
  flex: none;
  height: 20px;
  display: flex;
  justify-content: flex-end;
}
.status-info {
  width: 94px;
  border-left: 1px solid #999;
  background: linear-gradient(90deg, #ece9d8 2px, #d4d0c8 2px);
}
.filter {
  position: relative;
  width: 184px;
  padding: 1px 3px;
}
.filter select {
  width: 100%;
  height: 18px;
  padding: 0 4px;
  appearance: none;
  border: 1px solid #7f9db9;
  border-radius: 0;
  background: #fff;
  color: #000;
  font: inherit;
}
.filter .sb-btn {
  position: absolute;
  right: 4px;
  top: 2px;
  pointer-events: none;
}
.light {
  width: 58px;
  padding-left: 8px;
  border-left: 1px solid #999;
}
.light svg {
  width: 12px;
  height: 20px;
}
```
